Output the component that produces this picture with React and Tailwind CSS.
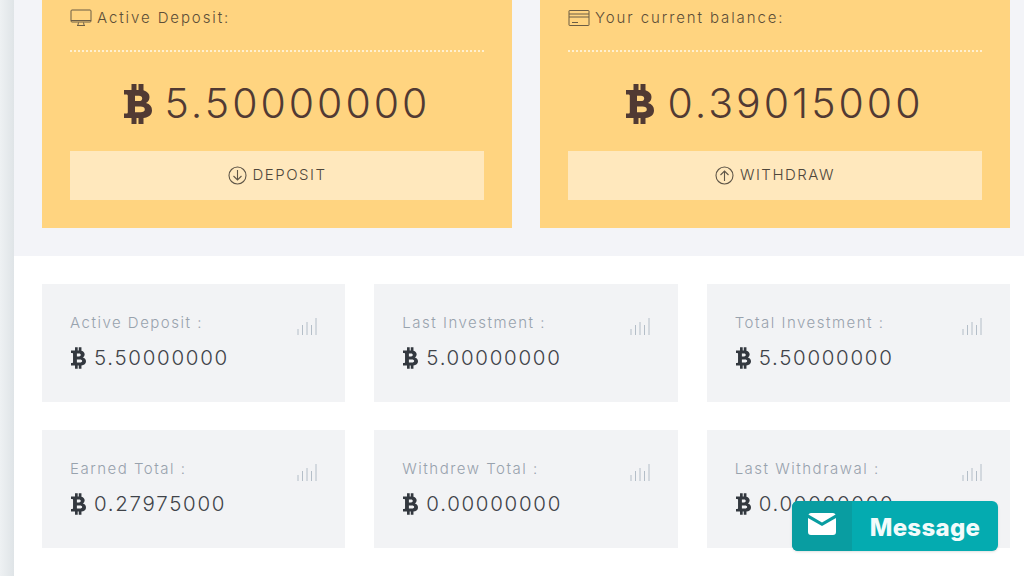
import React from 'react';

const stats = [
  { label: 'Active Deposit :', value: '5.50000000' },
  { label: 'Last Investment :', value: '5.00000000' },
  { label: 'Total Investment :', value: '5.50000000' },
  { label: 'Earned Total :', value: '0.27975000' },
  { label: 'Withdrew Total :', value: '0.00000000' },
  { label: 'Last Withdrawal :', value: '0.00000000' },
];

const BtcIcon = ({ className }) => (
  <svg className={className} viewBox="0 0 28 40" fill="currentColor" fillRule="evenodd">
    <path d="M0 6H7.5V0H12.5V6H14.5V0H19.5V6.3C23.5 7.5 25.5 10 25.5 13C25.5 16 24 18 22 19C26 20 28 22.5 28 26.5C28 31 24.5 33.5 19.5 34V40H14.5V34H12.5V40H7.5V34H0V29.5H2.5C3.3 29.5 3.8 29 3.8 28V12C3.8 11 3.3 10.5 2.5 10.5H0ZM11 11.8V17H15C17 17 18.2 16 18.2 14.4C18.2 12.8 17 11.8 15 11.8ZM11 22.6V28.2H16.5C19.2 28.2 20.8 27.2 20.8 25.4C20.8 23.6 19.2 22.6 16.5 22.6Z" />
  </svg>
);

const DesktopIcon = () => (
  <svg width="22" height="18" viewBox="0 0 22 18" fill="none" stroke="#6b5d45" strokeWidth="1">
    <rect x="1" y="1" width="20" height="12" rx="1" />
    <path d="M1 11.5h20M7 16.5h8M8.5 13.5l-.7 3M13.5 13.5l.7 3" />
  </svg>
);

const CardIcon = () => (
  <svg width="22" height="18" viewBox="0 0 22 18" fill="none" stroke="#6b5d45" strokeWidth="1">
    <rect x="1" y="1.5" width="20" height="15" rx="0.5" />
    <path d="M1 5h20M1 8h20M4 13.5h6" />
  </svg>
);

const CircleArrow = ({ up }) => (
  <svg width="19" height="19" viewBox="0 0 19 19" fill="none" stroke="#5f5648" strokeWidth="1.1">
    <circle cx="9.5" cy="9.5" r="8.5" />
    {up ? <path d="M9.5 15V5M5.5 9l4-4 4 4" /> : <path d="M9.5 4v10M5.5 10l4 4 4-4" />}
  </svg>
);

const BarsIcon = () => (
  <svg width="20" height="19" viewBox="0 0 20 19" fill="none" stroke="#b4bec8" strokeWidth="1">
    <path d="M1 18v-6M5.5 18V8M10 18V5M14.5 18V8M19 18V1" />
  </svg>
);

const BalanceCard = ({ icon, title, amount, action, up }) => (
  <div className="flex-1 h-[228px] bg-[#ffd480] px-7 flex flex-col">
    <div className="h-[52px] border-b-2 border-dotted border-[#fff0cf] flex items-start">
      <div className="flex items-center gap-[5px] mt-[8px] text-[15px] leading-[20px] font-light tracking-[1.9px] text-[#5c4e38]">
        {icon}
        <span>{title}</span>
      </div>
    </div>
    <div className="h-[99px] pt-[4px] flex items-center justify-center gap-[13px] text-[41px] leading-none font-light text-[#513a33]">
      <BtcIcon className="w-[28px] h-[40px]" />
      <span className="tracking-[3px]">{amount}</span>
    </div>
    <div className="h-[49px] bg-[#ffe8bd] flex items-center justify-center gap-[6px] text-[15px] font-light tracking-[1.5px] text-[#4f473b]">
      <CircleArrow up={up} />
      <span>{action}</span>
    </div>
  </div>
);

const StatCard = ({ label, value }) => (
  <div className="h-[118px] bg-[#f2f3f5] pl-7 pr-7 pt-[29px]">
    <div className="flex justify-between">
      <span className="text-[15px] leading-[20px] font-light tracking-[1.5px] text-[#98a2ad]">{label}</span>
      <span className="mt-[4px]"><BarsIcon /></span>
    </div>
    <div className="flex items-center gap-[8px] mt-[8px] pl-[1px] text-[20.5px] leading-[28px] font-light tracking-[1.7px] text-[#3f4349]">
      <BtcIcon className="w-[15px] h-[22px] text-[#33383f]" />
      <span>{value}</span>
    </div>
  </div>
);

export default function App() {
  return (
    <div className="relative w-[1024px] h-[576px] overflow-hidden flex bg-white font-['Inter',sans-serif]">
      <div className="w-[14px] shrink-0 bg-gradient-to-r from-[#eef1f3] to-[#dfe4e7]" />
      <div className="flex-1 flex flex-col">
        <div className="h-[256px] bg-[#f3f4f8] flex gap-7 pl-7 pr-[14px]">
          <BalanceCard icon={<DesktopIcon />} title="Active Deposit:" amount="5.50000000" action="DEPOSIT" />
          <BalanceCard icon={<CardIcon />} title="Your current balance:" amount="0.39015000" action="WITHDRAW" up />
        </div>
        <div className="flex-1 bg-white pl-7 pr-[14px] pt-7">
          <div className="grid grid-cols-3 gap-x-[29px] gap-y-7">
            {stats.map((s) => (
              <StatCard key={s.label} {...s} />
            ))}
          </div>
        </div>
      </div>
      <div className="absolute left-[792px] top-[501px] w-[206px] h-[50px] rounded-md overflow-hidden flex bg-[#04abb0] shadow-sm">
        <div className="w-[60px] bg-[#099da1] flex items-center justify-center pb-[4px]">
          <svg width="28" height="22" viewBox="0 0 28 22" fill="#fff">
            <path d="M3 0h22a3 3 0 0 1 2.6 1.5L14 9.5.4 1.5A3 3 0 0 1 3 0z" />
            <path d="M0 5l14 8 14-8v14a3 3 0 0 1-3 3H3a3 3 0 0 1-3-3z" />
          </svg>
        </div>
        <div className="flex-1 flex items-center justify-center pt-[4px] text-[24px] font-extrabold text-[#f2fbfb] tracking-[0.3px]">
          Message
        </div>
      </div>
    </div>
  );
}
